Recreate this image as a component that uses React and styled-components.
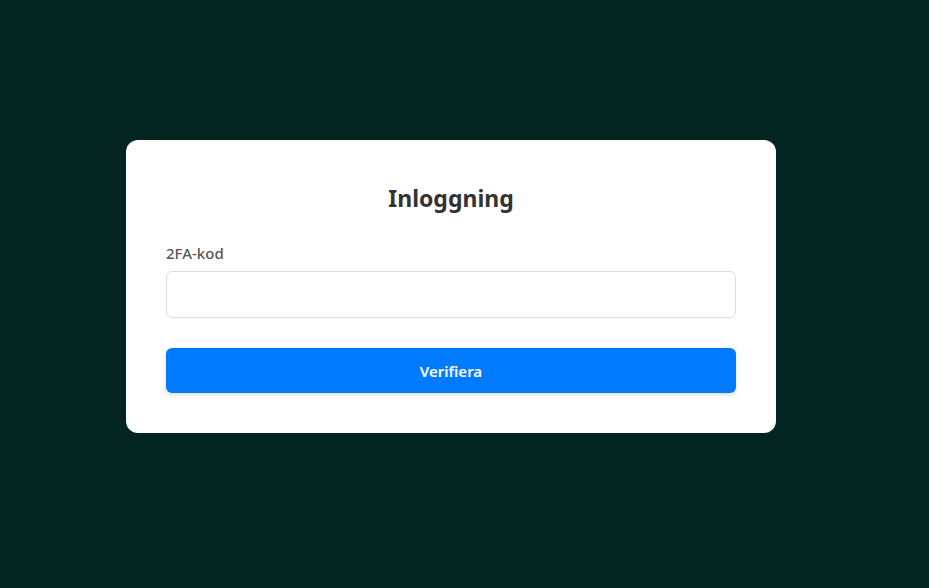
import React from 'react'
import styled, { createGlobalStyle } from 'styled-components'

const GlobalStyle = createGlobalStyle`
    html, body {
        margin: 0;
        padding: 0;
        background: #022522;
        font-family: 'Noto Sans', 'Open Sans', Arial, sans-serif;
    }
`

const Page = styled.div`
    min-height: 588px;
    padding-top: 140px;
    padding-left: 126px;
    box-sizing: border-box;
`

const Card = styled.form`
    width: 650px;
    box-sizing: border-box;
    background: #ffffff;
    border-radius: 12px;
    padding: 40px 40px 40px;
`

const Title = styled.h2`
    margin: 0 0 27px;
    text-align: center;
    font-size: 23px;
    line-height: 36px;
    font-weight: 700;
    color: #333333;
`

const Label = styled.label`
    display: block;
    margin-bottom: 8px;
    font-size: 15px;
    line-height: 20px;
    font-weight: 500;
    color: #555555;
`

const Input = styled.input`
    display: block;
    width: 100%;
    height: 47px;
    box-sizing: border-box;
    border: 1px solid #dddddd;
    border-radius: 6px;
    padding: 0 12px;
    font-size: 15px;
    margin-bottom: 30px;
    outline: none;
`

const Button = styled.button`
    display: block;
    width: 100%;
    height: 45px;
    border: none;
    border-radius: 6px;
    background: #007bff;
    color: #ffffff;
    font-family: inherit;
    font-size: 15px;
    font-weight: 600;
    box-shadow: 0 2px 4px rgba(0, 0, 0, 0.15);
    cursor: pointer;
`

export default function App() {
    return (
        <Page>
            <GlobalStyle />
            <Card onSubmit={(e) => e.preventDefault()}>
                <Title>Inloggning</Title>
                <Label htmlFor="code">2FA-kod</Label>
                <Input id="code" type="text" />
                <Button type="submit">Verifiera</Button>
            </Card>
        </Page>
    )
}
